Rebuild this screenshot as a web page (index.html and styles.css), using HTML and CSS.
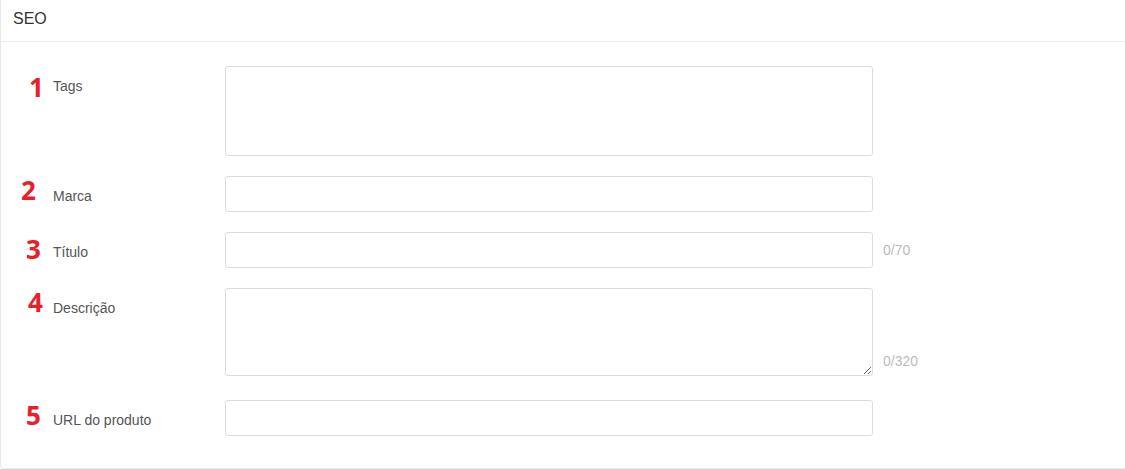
FILE: index.html
```html
<!DOCTYPE html>
<html lang="pt">
<head>
<meta charset="utf-8">
<title>SEO</title>
<link rel="stylesheet" href="styles.css">
</head>
<body>
<section class="card">
  <header class="card-header">SEO</header>
  <div class="card-body">
    <div class="row">
      <span class="mark mark-1">1</span>
      <label class="label">Tags</label>
      <textarea class="field field-tags"></textarea>
      <span class="count"></span>
    </div>
    <div class="row">
      <span class="mark mark-2">2</span>
      <label class="label">Marca</label>
      <input class="field" type="text">
      <span class="count"></span>
    </div>
    <div class="row">
      <span class="mark mark-3">3</span>
      <label class="label">Título</label>
      <input class="field" type="text">
      <span class="count">0/70</span>
    </div>
    <div class="row">
      <span class="mark mark-4">4</span>
      <label class="label">Descrição</label>
      <textarea class="field field-desc"></textarea>
      <span class="count count-bottom">0/320</span>
    </div>
    <div class="row row-last">
      <span class="mark mark-5">5</span>
      <label class="label">URL do produto</label>
      <input class="field" type="text">
      <span class="count"></span>
    </div>
  </div>
</section>
</body>
</html>
```

FILE: styles.css
```css
html, body {
  margin: 0;
  padding: 0;
  background: #fff;
}

body {
  font-family: "Liberation Sans", Arial, sans-serif;
  color: #333;
}

.card {
  width: 1125px;
  height: 469px;
  box-sizing: border-box;
  border: 1px solid #e9e9e9;
  border-top: none;
  border-right: none;
  border-radius: 0 0 0 4px;
}

.card-header {
  height: 42px;
  box-sizing: border-box;
  padding: 10px 0 0 12px;
  font-size: 16px;
  line-height: 18px;
  color: #333;
  border-bottom: 1px solid #ebebeb;
}

.card-body {
  padding: 24px 0 0 0;
  display: flex;
  flex-direction: column;
  gap: 20px;
}

.row {
  position: relative;
  display: grid;
  grid-template-columns: 214px 648px auto;
  column-gap: 10px;
  align-items: start;
}

.row-last {
  margin-top: 4px;
}

.label {
  padding-left: 52px;
  padding-top: 4px;
  font-size: 14px;
  line-height: 32px;
  color: #555;
}

.field {
  display: block;
  width: 648px;
  height: 36px;
  margin: 0;
  padding: 6px 10px;
  box-sizing: border-box;
  border: 1px solid #dcdcdc;
  border-radius: 3px;
  background: #fff;
  font-family: inherit;
  font-size: 14px;
  outline: none;
}

.field-tags {
  height: 90px;
  resize: none;
}

.field-desc {
  height: 88px;
  resize: vertical;
}

.count {
  font-size: 14px;
  line-height: 36px;
  color: #bbb;
}

.count-bottom {
  align-self: end;
  line-height: 20px;
  padding-bottom: 5px;
}

.mark {
  position: absolute;
  font-family: "Open Sans", "DejaVu Sans", sans-serif;
  font-weight: 700;
  font-size: 26px;
  line-height: 26px;
  color: #e8202a;
}

.mark-1 { left: 28px; top: 8px; }
.mark-2 { left: 20px; top: 1px; }
.mark-3 { left: 25px; top: 4px; }
.mark-4 { left: 27px; top: 1px; }
.mark-5 { left: 25px; top: 2px; }
```
